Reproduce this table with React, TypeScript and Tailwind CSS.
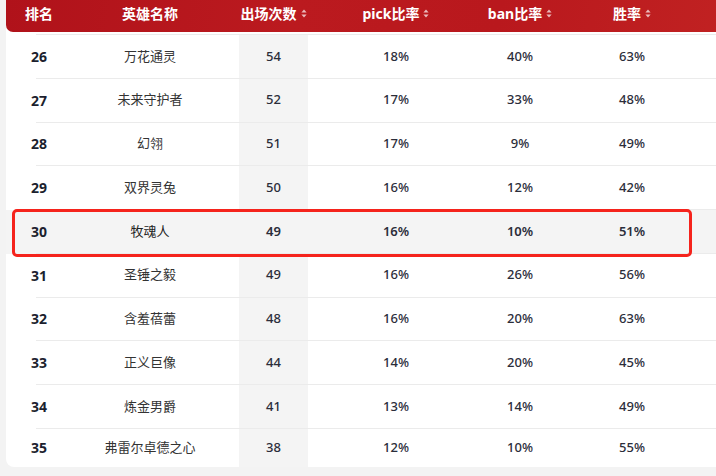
import React from 'react';

const rows = [
  { rank: 26, name: '万花通灵', games: 54, pick: '18%', ban: '40%', win: '63%' },
  { rank: 27, name: '未来守护者', games: 52, pick: '17%', ban: '33%', win: '48%' },
  { rank: 28, name: '幻翎', games: 51, pick: '17%', ban: '9%', win: '49%' },
  { rank: 29, name: '双界灵兔', games: 50, pick: '16%', ban: '12%', win: '42%' },
  { rank: 30, name: '牧魂人', games: 49, pick: '16%', ban: '10%', win: '51%', active: true },
  { rank: 31, name: '圣锤之毅', games: 49, pick: '16%', ban: '26%', win: '56%' },
  { rank: 32, name: '含羞蓓蕾', games: 48, pick: '16%', ban: '20%', win: '63%' },
  { rank: 33, name: '正义巨像', games: 44, pick: '14%', ban: '20%', win: '45%' },
  { rank: 34, name: '炼金男爵', games: 41, pick: '13%', ban: '14%', win: '49%' },
  { rank: 35, name: '弗雷尔卓德之心', games: 38, pick: '12%', ban: '10%', win: '55%' },
];

const grid = 'grid grid-cols-[66px_167px_69px_176px_72px_152px_110px]';

function SortIcon() {
  return (
    <svg width="6" height="9" viewBox="0 0 6 9" className="ml-[4px] opacity-70">
      <path d="M3 0.5L5.6 3.6H0.4Z" fill="#fff" />
      <path d="M3 8.5L5.6 5.4H0.4Z" fill="#fff" />
    </svg>
  );
}

export default function App() {
  return (
    <div
      className="w-[716px] h-[476px] overflow-hidden bg-[#f3f3f3] pl-[6px]"
      style={{ fontFamily: '"Noto Sans", "Noto Sans CJK SC", sans-serif' }}
    >
      <div className="relative w-[820px] bg-white rounded-b-[8px]">
        {/* header */}
        <div className="h-[32px] rounded-bl-[7px] bg-[linear-gradient(100deg,#b0121a_0%,#bb1a1f_35%,#b9181d_60%,#c42624_100%)] text-white font-bold text-[14px]">
          <div className={`${grid} h-full items-center pb-[5px]`}>
            <div className="text-center">排名</div>
            <div className="text-center pr-[11px]">英雄名称</div>
            <div className="flex items-center justify-center">出场次数<SortIcon /></div>
            <div className="flex items-center justify-center">pick比率<SortIcon /></div>
            <div className="flex items-center justify-center">ban比率<SortIcon /></div>
            <div className="flex items-center justify-center">胜率<SortIcon /></div>
            <div className="flex items-center justify-center">场均击杀<SortIcon /></div>
          </div>
        </div>
        <div className="h-[2px]" />
        <div className="h-px bg-[#ebebeb] ml-[30px]" />

        {rows.map((r, i) => (
          <div key={r.rank} className={r.active ? 'bg-[#f4f4f4]' : ''}>
            <div className={`${grid} ${i === rows.length - 1 ? 'h-[38px]' : 'h-[42.75px]'} items-center text-[13px] text-[#2b2d3a]`}>
              <div className="text-center font-bold text-[14px] text-[#1c1f2e]">{r.rank}</div>
              <div className={`text-center pr-[11px] ${r.active ? 'text-[#222]' : 'text-[#333]'}`}>{r.name}</div>
              <div className={`h-full flex items-center justify-center ${r.active ? 'font-semibold' : 'font-medium bg-[#f4f4f4]'}`}>{r.games}</div>
              <div className={`text-center ${r.active ? 'font-semibold' : 'font-medium'}`}>{r.pick}</div>
              <div className={`text-center ${r.active ? 'font-semibold' : 'font-medium'}`}>{r.ban}</div>
              <div className={`text-center ${r.active ? 'font-semibold' : 'font-medium'}`}>{r.win}</div>
              <div />
            </div>
            {i < rows.length - 1 && <div className="h-px bg-[#ebebeb] ml-[30px]" />}
          </div>
        ))}

        {/* highlight annotation */}
        <div className="absolute left-[6px] top-[209px] w-[680px] h-[48px] border-[3px] border-[#f5231c] rounded-[5px]" />
      </div>
    </div>
  );
}
